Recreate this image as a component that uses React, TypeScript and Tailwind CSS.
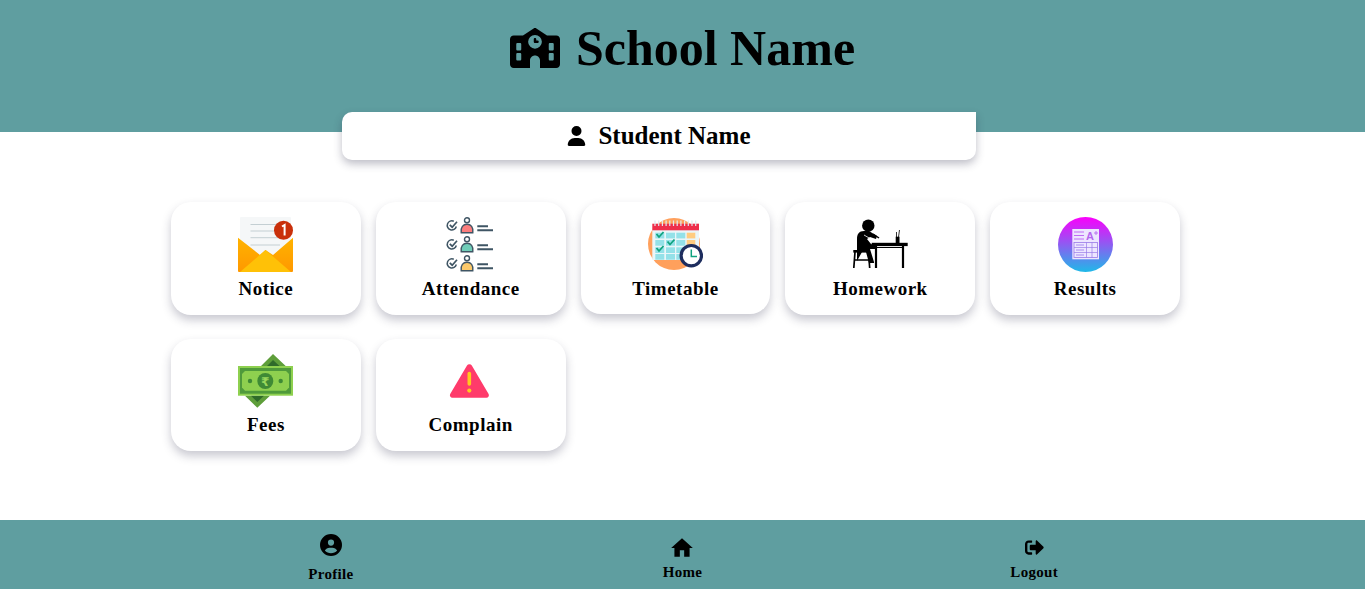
import type { ReactNode } from 'react';
import { FaSignOutAlt } from 'react-icons/fa';
import { FaSchool, FaUser, FaCircleUser } from 'react-icons/fa6';
import { MdHome } from 'react-icons/md';

function NoticeIcon() {
  return (
    <svg viewBox="0 0 55 55" className="w-[55px] h-[55px]">
      <defs>
        <linearGradient id="env" x1="0" y1="0" x2="0" y2="1">
          <stop offset="0" stopColor="#ffb300" />
          <stop offset="1" stopColor="#ff9800" />
        </linearGradient>
      </defs>
      <rect x="2" y="0" width="51" height="40" rx="1" fill="#f5f7f8" />
      <path d="M12.5 7.5H42M12.5 14H38M12.5 20.7H42M12.5 28H42" stroke="#c4cfd3" strokeWidth="1" />
      <path d="M0 20.7 22 38 27.5 33 35 38 55 20.7V54a1 1 0 0 1-1 1H1a1 1 0 0 1-1-1Z" fill="url(#env)" />
      <path d="M2 55 27.5 33 53 55Z" fill="#ffc107" />
      <circle cx="45.5" cy="13.3" r="9.5" fill="#c9300b" />
      <path d="M44 9.5 46.6 8V18.5" stroke="#fff" strokeWidth="2" fill="none" />
    </svg>
  );
}

function AttendanceIcon() {
  const rows = [
    { y: 0, fill: '#fb7d7d' },
    { y: 19, fill: '#6fcdb8' },
    { y: 38, fill: '#fbc96b' },
  ];
  return (
    <svg viewBox="0 0 55 55" className="w-[55px] h-[55px]">
      {rows.map((r) => (
        <g key={r.y} transform={`translate(0 ${r.y})`} stroke="#3f5564" fill="none">
          <path d="M13.300 9.500a4.600 4.600 0 1 1-2.500-5.300" strokeWidth="1.500" />
          <path d="M6.800 7.800 9.200 10.200 14 4.800" strokeWidth="1.700" />
          <circle cx="24" cy="3.200" r="2.500" strokeWidth="1.400" />
          <path d="M18.200 15.700c-.8-5.500 2-8.500 5.800-8.500s6.600 3 5.800 8.500Z" fill={r.fill} strokeWidth="1.400" />
          <path d="M34.300 9.300H45M34.300 13.300H50" strokeWidth="1.900" />
        </g>
      ))}
    </svg>
  );
}

function TimetableIcon() {
  const xs = [7.3, 18, 28.3];
  const ys = [15.7, 23, 30.3, 37];
  return (
    <svg viewBox="0 0 55 55" className="w-[55px] h-[55px]">
      <circle cx="26" cy="27" r="26" fill="#ffa05c" />
      <rect x="4.300" y="10" width="46.700" height="33" fill="#eaf6f9" />
      {ys.map((y) =>
        xs.map((x) => <rect key={`${x}-${y}`} x={x} y={y} width="9" height="5.700" fill="#94e1e8" />),
      )}
      {ys.map((y) => (
        <rect key={y} x="38.700" y={y} width="8.600" height="5.700" fill="#ffcc80" />
      ))}
      <rect x="4.300" y="6.700" width="46.700" height="6.600" fill="#ee2e4b" />
      <path
        d="M7 3.500V9M10.700 3.500V9M14.400 3.500V9M18.100 3.500V9M21.800 3.500V9M25.500 3.500V9M29.200 3.500V9M32.900 3.500V9M36.600 3.500V9M40.300 3.500V9M44 3.500V9M47.700 3.500V9"
        stroke="#dfe8ef"
        strokeWidth="1.200"
      />
      <path d="M8.500 17 11 20 15.500 15M8.500 31 11 34 15.500 29M19.500 24.500 22 27.500 26.500 22.500" stroke="#10a37f" strokeWidth="1.800" fill="none" />
      <circle cx="43.300" cy="38.700" r="10.200" fill="#fff" stroke="#1d2d5e" strokeWidth="3.200" />
      <path d="M43.300 32.500V39.500H49" stroke="#10a37f" strokeWidth="1.500" fill="none" />
    </svg>
  );
}

function HomeworkIcon() {
  return (
    <svg viewBox="0 0 55 55" className="w-[55px] h-[55px]">
      <circle cx="15.300" cy="8.700" r="6.200" fill="#000" />
      <path d="M4 44V22c0-5 2-8 7-8h5l8 5-1 3-6-2-3 2 4 5 6 2-1 3h-6l4 13v1h-5l-3-11H9Z" fill="#000" />
      <path d="M20 17 26 21" stroke="#000" strokeWidth="1.500" fill="none" />
      <path d="M11 18 17 21.500" stroke="#fff" strokeWidth="0.800" />
      <rect x="18.700" y="25.800" width="36" height="3.300" fill="#000" />
      <path d="M23 28V51M50 28V51" stroke="#000" strokeWidth="2.200" />
      <path d="M23 30.500H50" stroke="#000" strokeWidth="1" />
      <rect x="0.300" y="33" width="16.700" height="2.600" fill="#000" />
      <path d="M2 35 .8 51M15.500 35 16.700 51M1.500 43H16" stroke="#000" strokeWidth="1.700" />
      <rect x="42.700" y="19.700" width="3.800" height="6.300" fill="#000" />
      <path d="M43.500 20V15M45.500 20 46.500 13" stroke="#000" strokeWidth="0.800" />
    </svg>
  );
}

function ResultsIcon() {
  return (
    <svg viewBox="0 0 55 55" className="w-[55px] h-[55px]">
      <defs>
        <linearGradient id="res" x1="0" y1="0" x2="0" y2="1">
          <stop offset="0" stopColor="#fb00fb" />
          <stop offset="1" stopColor="#1fb9e8" />
        </linearGradient>
      </defs>
      <circle cx="27.500" cy="27.500" r="27.500" fill="url(#res)" />
      <rect x="14.300" y="12" width="26.700" height="30.300" fill="#ede6ff" />
      <path d="M16 15H26M16 18.500H26M16 22H26" stroke="#c06cf5" strokeWidth="1" />
      <text x="28" y="23" fontFamily='"Liberation Sans", sans-serif' fontSize="11" fill="#b566ee">
        A
      </text>
      <path d="M38 14V18M36 16H40" stroke="#b566ee" strokeWidth="0.900" />
      <rect x="16" y="25.500" width="23.500" height="15" fill="none" stroke="#9a7be8" strokeWidth="0.800" />
      <path d="M16 30.500H39.500M16 35.500H39.500M28.500 25.500V40.500M34 25.500V40.500" stroke="#9a7be8" strokeWidth="0.700" />
      <path d="M18 28H26M18 33H26M18 38H26" stroke="#a78cf0" strokeWidth="1" />
    </svg>
  );
}

function FeesIcon() {
  return (
    <svg viewBox="0 0 55 54" className="w-[55px] h-[54px]">
      <path d="M23 12 35 0 47.700 12ZM7 41.700H32L19.300 53.700Z" fill="#5e9e3a" />
      <path d="M29 12 35 6 41.500 12ZM13 41.700H26L19.300 48Z" fill="#2f6b2a" />
      <rect x="0" y="12" width="55" height="29.700" fill="#8ed04f" />
      <rect x="2" y="14" width="51" height="25.700" fill="#4f9a3b" />
      <path d="M7 17H48L51 20V33.500L48 36.700H7L4 33.500V20Z" fill="#8ed04f" />
      <circle cx="27.300" cy="27" r="8" fill="#3f8a35" />
      <text x="27.300" y="31.500" textAnchor="middle" fontFamily='"DejaVu Sans", sans-serif' fontSize="12" fontWeight="700" fill="#9ad85c">
        ₹
      </text>
      <circle cx="12" cy="27" r="2.200" fill="#3f8a35" />
      <circle cx="42.700" cy="27" r="2.200" fill="#3f8a35" />
    </svg>
  );
}

function ComplainIcon() {
  return (
    <svg viewBox="0 0 55 54" className="w-[55px] h-[54px]">
      <path d="M24 11.500a2.800 2.800 0 0 1 4.800 0L45.600 40a2.500 2.500 0 0 1-2.200 3.700H9.400A2.500 2.500 0 0 1 7.200 40Z" fill="#ff3b6b" />
      <path d="M26.300 19.500V30" stroke="#ffc81e" strokeWidth="3.600" strokeLinecap="round" />
      <circle cx="26.300" cy="36.600" r="2.100" fill="#ffc81e" />
    </svg>
  );
}

const items: { label: string; icon: ReactNode; cardClass: string }[] = [
  { label: 'Notice', icon: <NoticeIcon />, cardClass: 'pb-[14px]' },
  { label: 'Attendance', icon: <AttendanceIcon />, cardClass: 'pb-[14px]' },
  { label: 'Timetable', icon: <TimetableIcon />, cardClass: 'pb-[13px]' },
  { label: 'Homework', icon: <HomeworkIcon />, cardClass: 'pb-[14px]' },
  { label: 'Results', icon: <ResultsIcon />, cardClass: 'pb-[14px]' },
  { label: 'Fees', icon: <FeesIcon />, cardClass: 'pb-[14px]' },
  { label: 'Complain', icon: <ComplainIcon />, cardClass: 'pb-[14px]' },
];

export default function App() {
  return (
    <div className="min-h-screen flex flex-col bg-white text-black font-['Liberation_Serif',serif] font-bold">
      <header className="h-[132px] bg-[#5f9ea0] flex justify-center items-start gap-4 pt-[21px]">
        <FaSchool className="w-[50px] h-[40px] mt-[7px]" />
        <h1 className="text-[50px] leading-[55px]">School Name</h1>
      </header>

      <div className="-mt-5 ml-[342px] w-[634px] h-[48px] bg-white rounded-[10px] rounded-tr-none shadow-[0_4px_8px_rgba(40,40,70,0.3)] flex items-center justify-center gap-[12px]">
        <FaUser className="w-[19px] h-[20px]" />
        <span className="text-[25px]">Student Name</span>
      </div>

      <main className="ml-[171px] mt-[42px] w-[1009px] grid grid-cols-5 gap-x-[15px] gap-y-[24px] items-start">
        {items.map((item) => (
          <div
            key={item.label}
            className={`bg-white rounded-[20px] shadow-[0_5px_10px_rgba(40,40,70,0.25)] pt-[15px] flex flex-col items-center ${item.cardClass}`}
          >
            {item.icon}
            <div className="mt-[5px] text-[19px] leading-[24px] tracking-[0.5px]">{item.label}</div>
          </div>
        ))}
      </main>

      <footer className="mt-auto h-[69px] bg-[#5f9ea0]">
        <div className="ml-[155px] w-[1055px] grid grid-cols-3 text-[15px] leading-[20px]">
          <div className="flex flex-col items-center pt-[14px]">
            <FaCircleUser className="w-[22px] h-[22px]" />
            <span className="mt-[8px] tracking-[0.3px]">Profile</span>
          </div>
          <div className="flex flex-col items-center pt-[15px]">
            <MdHome className="w-[28px] h-[26px]" />
            <span className="mt-[1px] tracking-[0.3px]">Home</span>
          </div>
          <div className="flex flex-col items-center pt-[18px]">
            <FaSignOutAlt className="w-[21px] h-[19px]" />
            <span className="mt-[5px] tracking-[0.3px]">Logout</span>
          </div>
        </div>
      </footer>
    </div>
  );
}
